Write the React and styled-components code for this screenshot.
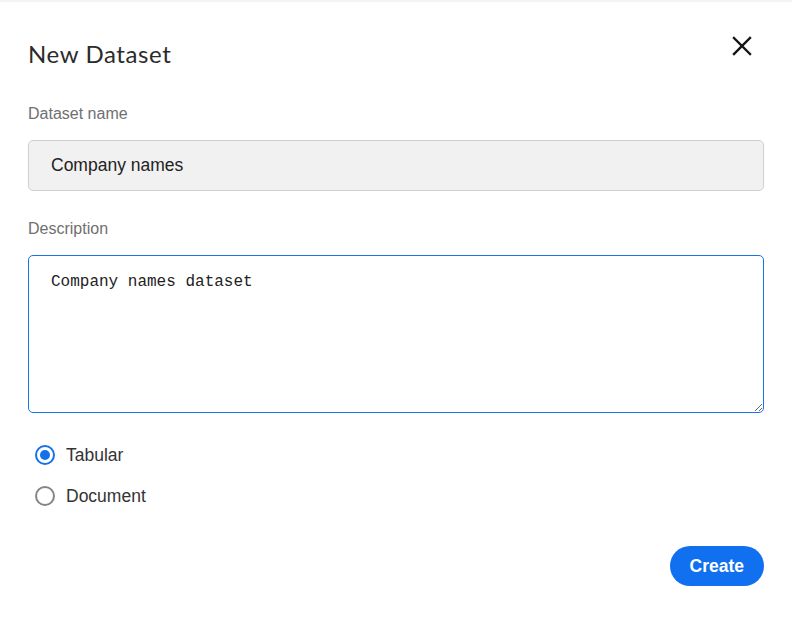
import React, { useState } from 'react'
import styled, { createGlobalStyle } from 'styled-components'

const GlobalStyle = createGlobalStyle`
  html, body {
    margin: 0;
    padding: 0;
    background: #fff;
    font-family: "Liberation Sans", Arial, sans-serif;
  }
  * { box-sizing: border-box; }
`

const Dialog = styled.section`
  width: 792px;
  min-height: 617px;
  border-top: 2px solid #f3f3f3;
  padding: 0 28px 0 28px;
  display: flex;
  flex-direction: column;
`

const Header = styled.header`
  display: flex;
  justify-content: space-between;
  align-items: center;
  padding-top: 36px;
  height: 67px;
`

const Title = styled.h2`
  margin: 0;
  font-family: Lato, "Noto Sans", sans-serif;
  font-weight: 400;
  font-size: 24px;
  color: #2b2b2b;
  letter-spacing: 0.6px;
`

const CloseButton = styled.button`
  border: 0;
  background: none;
  padding: 0;
  width: 24px;
  height: 24px;
  margin-right: 10px;
  margin-top: -16px;
  cursor: pointer;
  display: flex;
  align-items: center;
  justify-content: center;
`

const Field = styled.div`
  display: flex;
  flex-direction: column;
  margin-top: ${p => p.$top}px;
`

const Label = styled.label`
  font-size: 16px;
  color: #6f6f6f;
  line-height: 18px;
  margin-bottom: 17px;
`

const TextInput = styled.input`
  height: 51px;
  border: 1px solid #cfcfcf;
  border-radius: 5px;
  background: #f1f1f1;
  padding: 0 22px;
  font-family: "Liberation Sans", Arial, sans-serif;
  font-size: 17.5px;
  color: #222;
  outline: none;
`

const TextArea = styled.textarea`
  height: 158px;
  border: 1px solid #1a73e8;
  border-radius: 5px;
  background: #fff;
  padding: 16px 22px;
  font-family: "Liberation Mono", "DejaVu Sans Mono", monospace;
  font-size: 16px;
  line-height: 20px;
  color: #222;
  outline: none;
  resize: vertical;
`

const Options = styled.div`
  display: flex;
  flex-direction: column;
  gap: 19px;
  margin-top: 31px;
  padding-left: 7px;
`

const Option = styled.label`
  display: flex;
  align-items: center;
  gap: 11px;
  font-size: 17.5px;
  color: #333;
  cursor: pointer;
  height: 22px;
`

const RadioDot = styled.span`
  width: 20px;
  height: 20px;
  border-radius: 50%;
  border: 2px solid ${p => (p.$checked ? '#1670eb' : '#858585')};
  display: flex;
  align-items: center;
  justify-content: center;

  &::after {
    content: '';
    width: 10px;
    height: 10px;
    border-radius: 50%;
    background: ${p => (p.$checked ? '#1670eb' : 'transparent')};
  }
`

const Footer = styled.footer`
  display: flex;
  justify-content: flex-end;
  margin-top: 39px;
`

const PrimaryButton = styled.button`
  height: 40px;
  padding: 0 20px;
  border: 0;
  border-radius: 20px;
  background: #1170f0;
  color: #fff;
  font-family: "Liberation Sans", Arial, sans-serif;
  font-weight: 700;
  font-size: 17.5px;
  cursor: pointer;
`

const App = () => {
  const [name, setName] = useState('Company names')
  const [description, setDescription] = useState('Company names dataset')
  const [kind, setKind] = useState('tabular')

  return (
    <>
      <GlobalStyle />
      <Dialog>
        <Header>
          <Title>New Dataset</Title>
          <CloseButton aria-label="Close">
            <svg width="20" height="20" viewBox="0 0 20 20">
              <path d="M2 2 L18 18 M18 2 L2 18" stroke="#151515" strokeWidth="2.4" strokeLinecap="square" />
            </svg>
          </CloseButton>
        </Header>

        <Field $top={36}>
          <Label>Dataset name</Label>
          <TextInput value={name} onChange={e => setName(e.target.value)} />
        </Field>

        <Field $top={29}>
          <Label>Description</Label>
          <TextArea value={description} onChange={e => setDescription(e.target.value)} />
        </Field>

        <Options>
          <Option onClick={() => setKind('tabular')}>
            <RadioDot $checked={kind === 'tabular'} />
            Tabular
          </Option>
          <Option onClick={() => setKind('document')}>
            <RadioDot $checked={kind === 'document'} />
            Document
          </Option>
        </Options>

        <Footer>
          <PrimaryButton>Create</PrimaryButton>
        </Footer>
      </Dialog>
    </>
  )
}

export default App
